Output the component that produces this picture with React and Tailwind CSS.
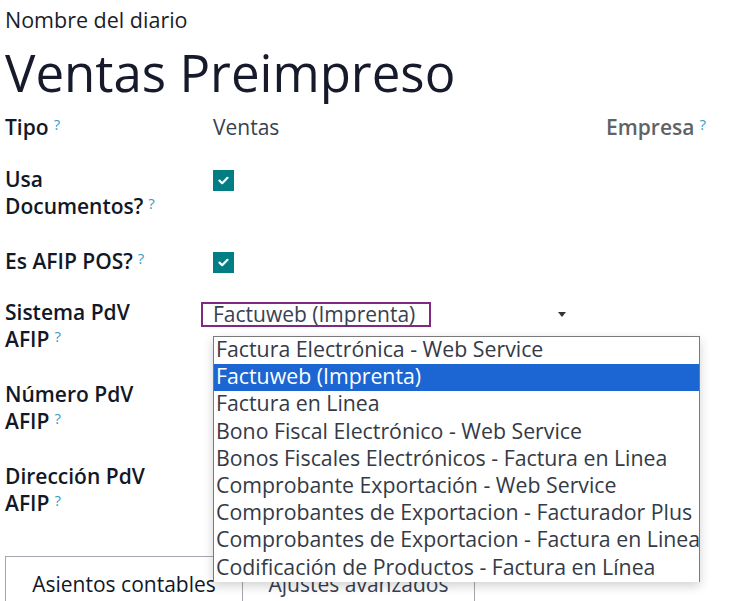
import React from 'react';

const font = { fontFamily: '"Open Sans", "Noto Sans", sans-serif' };

const Help = () => (
    <sup className="ml-[5px] text-[15px] font-medium text-[#3a9bc2] relative -top-[5px]">?</sup>
);

const options = [
    'Factura Electrónica - Web Service',
    'Factuweb (Imprenta)',
    'Factura en Linea',
    'Bono Fiscal Electrónico - Web Service',
    'Bonos Fiscales Electrónicos - Factura en Linea',
    'Comprobante Exportación - Web Service',
    'Comprobantes de Exportacion - Facturador Plus',
    'Comprobantes de Exportacion - Factura en Linea',
    'Codificación de Productos - Factura en Línea',
];

const Check = () => (
    <div className="w-[21px] h-[21px] bg-[#017e84] flex items-center justify-center mt-[4px]">
        <svg width="11" height="9" viewBox="0 0 11 9">
            <path d="M1.5 4.6 L4.2 7.2 L9.5 1.8" fill="none" stroke="white" strokeWidth="2.2" strokeLinecap="round" strokeLinejoin="round" />
        </svg>
    </div>
);

const Label = ({ children }) => (
    <div className="w-[208px] shrink-0 text-[21px] leading-[27px] font-semibold text-[#111827]">{children}</div>
);

export default function App() {
    return (
        <div className="relative w-[732px] h-[601px] overflow-hidden bg-white text-[#111827]" style={font}>
            <div className="pl-[5px]">
                <div className="pt-[6px] text-[21.5px] leading-[28px] font-medium text-[#1a1d29]">Nombre del diario</div>
                <div className="text-[51px] leading-[64px] mt-[6px] text-[#161a2b]">Ventas Preimpreso</div>

                <div className="flex mt-[10px]">
                    <Label>Tipo<Help /></Label>
                    <div className="w-[393px] text-[21px] leading-[27px] text-[#374151]">Ventas</div>
                    <div className="text-[21px] leading-[27px] font-semibold text-[#5f6368]">Empresa<Help /></div>
                </div>

                <div className="flex mt-[25px]">
                    <Label>Usa<br />Documentos?<Help /></Label>
                    <Check />
                </div>

                <div className="flex mt-[28px]">
                    <Label>Es AFIP POS?<Help /></Label>
                    <Check />
                </div>

                <div className="flex mt-[24px]">
                    <Label>Sistema PdV<br />AFIP<Help /></Label>
                    <div className="relative -ml-[12px] mt-[3px] w-[370px] h-[25px]">
                        <div className="w-[230px] h-[25px] border-2 border-[#7e2a83] pl-[10px] text-[21px] leading-[21px] whitespace-nowrap text-[#374151]">Factuweb (Imprenta)</div>
                        <svg className="absolute left-[357px] top-[10px]" width="8" height="5" viewBox="0 0 8 5">
                            <path d="M0 0 H8 L4 5 Z" fill="#333" />
                        </svg>
                    </div>
                </div>

                <div className="flex mt-[28px]">
                    <Label>Número PdV<br />AFIP<Help /></Label>
                </div>

                <div className="flex mt-[28px]">
                    <Label>Dirección PdV<br />AFIP<Help /></Label>
                </div>

                <div className="flex mt-[39px] text-[21px] leading-[27px]">
                    <div className="w-[238px] h-[60px] border-t border-l border-r border-[#a3a7ad] pt-[14px] text-center text-[#111827]">Asientos contables</div>
                    <div className="w-[232px] h-[60px] border-t border-r border-[#a3a7ad] pt-[14px] text-center text-[#374151]">Ajustes avanzados</div>
                </div>
            </div>

            <div className="absolute left-[213px] top-[336px] w-[487px] bg-white border border-[#7a7a7a] border-b-0 shadow-[0_4px_10px_rgba(0,0,0,0.18)]">
                {options.map((opt, i) => (
                    <div
                        key={opt}
                        className={
                            i === 1
                                ? 'h-[27.2px] pl-[2px] text-[21.3px] leading-[24px] whitespace-nowrap bg-[#1b66d2] text-white'
                                : 'h-[27.2px] pl-[2px] text-[21.3px] leading-[24px] whitespace-nowrap text-[#343a46]'
                        }
                    >
                        {opt}
                    </div>
                ))}
            </div>
        </div>
    );
}
